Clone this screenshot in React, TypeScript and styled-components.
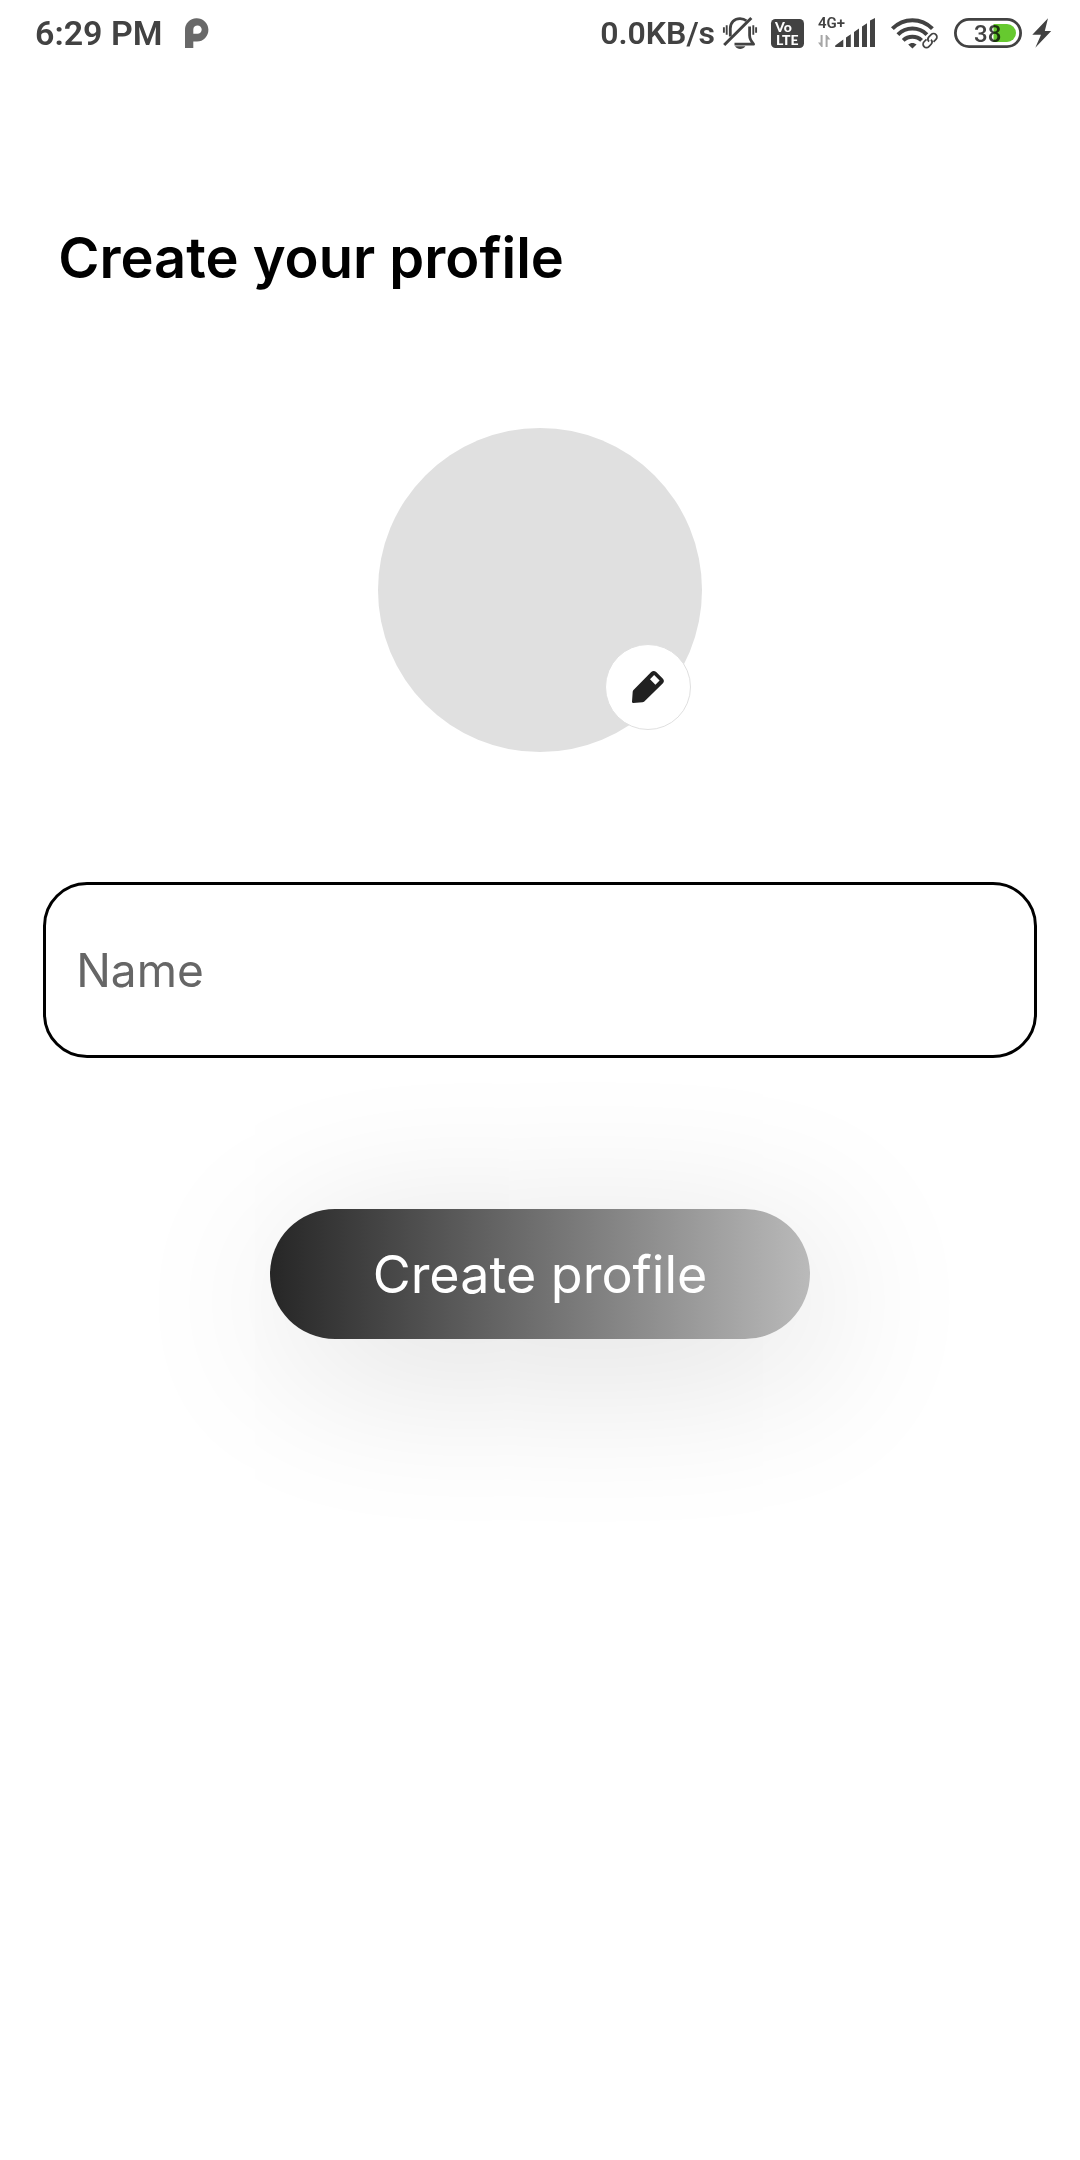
import React from "react";
import styled, { createGlobalStyle } from "styled-components";

const ink = "#424242";

const GlobalStyle = createGlobalStyle`
  *, *::before, *::after { box-sizing: border-box; }
  body {
    margin: 0;
    background: #ffffff;
    font-family: Inter, "Open Sans", sans-serif;
  }
`;

const Screen = styled.div`
  display: flex;
  flex-direction: column;
  min-height: 100vh;
  overflow-x: hidden;
  background: #ffffff;
`;

const StatusBar = styled.header`
  display: flex;
  justify-content: space-between;
  align-items: center;
  height: 66px;
  padding: 0 28px 0 35px;
  color: ${ink};
  font-family: Roboto, sans-serif;
  font-weight: 600;
`;

const StatusGroup = styled.div<{ $gap: number }>`
  display: flex;
  align-items: center;
  gap: ${(p) => p.$gap}px;
`;

const StatusText = styled.span<{ $size: number }>`
  font-size: ${(p) => p.$size}px;
  line-height: 40px;
  white-space: nowrap;
`;

const StatusIcon = styled.svg`
  display: block;
  flex: none;
  height: 32px;
  overflow: visible;
`;

const Form = styled.form`
  display: flex;
  flex-direction: column;
  align-items: center;
  padding: 150px 4% 0;
`;

const Title = styled.h1`
  align-self: stretch;
  margin: 0 0 128px;
  padding-left: 15px;
  color: #000000;
  font-size: 56px;
  font-weight: 600;
  line-height: 84px;
`;

const Avatar = styled.div`
  position: relative;
  width: 324px;
  height: 324px;
  margin-bottom: 130px;
  border-radius: 50%;
  background: #e0e0e0;
`;

const EditButton = styled.button`
  position: absolute;
  right: 11px;
  bottom: 22px;
  display: grid;
  place-items: center;
  width: 86px;
  height: 86px;
  padding: 0;
  border: 1px solid #e0e0e0;
  border-radius: 50%;
  background: #ffffff;
  color: #212121;
`;

const NameInput = styled.input`
  width: 100%;
  height: 176px;
  margin-bottom: 151px;
  padding: 0 30px;
  border: 3px solid #000000;
  border-radius: 44px;
  outline: none;
  background: #ffffff;
  color: #000000;
  font: 400 46px/66px Inter, "Open Sans", sans-serif;

  &::placeholder {
    color: #666666;
    opacity: 1;
  }
`;

const SubmitButton = styled.button`
  width: 540px;
  max-width: 100%;
  height: 130px;
  padding: 0;
  border: 0;
  border-radius: 65px;
  background: linear-gradient(90deg, #262626, #bababa);
  box-shadow: 14px 28px 170px rgba(0, 0, 0, 0.14);
  color: #ffffff;
  font: 400 52px/75px Inter, "Open Sans", sans-serif;
`;

const ParkLogo = () => (
  <StatusIcon width="24" viewBox="0 0 24 32" aria-hidden="true">
    <path
      fill="#686868"
      fillRule="evenodd"
      d="M0 31V13.2A11.7 11.7 0 1 1 12 24.6H8.3V31ZM8.3 16.8H12.3A4.2 4.2 0 1 0 8.3 12.6Z"
    />
  </StatusIcon>
);

const MutedBell = () => (
  <StatusIcon width="40" viewBox="0 0 40 32" fill="none" stroke={ink} strokeWidth="2.8" aria-hidden="true">
    <path d="M7.3 19.5V11.5C7.3 5.5 11.5 1.6 17 1.6c2.6 0 4.8.8 6.4 2.2" />
    <path d="M26.6 9.4V18.5c0 3.8 1.6 5.8 4 8.6H11.5" strokeLinejoin="round" />
    <path d="M1.2 28 28.3 1" strokeWidth="3" />
    <path d="M.9 10.3v5.4M3.7 8.3v9.4M30.3 8.3v9.4M33.1 10.3v5.4" strokeWidth="1.9" />
    <path d="M12 29.2h10.4c-1.4 1.9-3.2 2.7-5.2 2.7s-3.8-.8-5.2-2.7Z" fill={ink} stroke="none" />
  </StatusIcon>
);

const VolteBadge = () => (
  <StatusIcon width="40" viewBox="0 0 40 32" aria-label="VoLTE">
    <rect x="0" y="2" width="33" height="29" rx="4.5" fill={ink} />
    <g fill="#ffffff" fontFamily="Lato, sans-serif" fontWeight="900" fontSize="14">
      <text x="4" y="15">Vo</text>
      <text x="5" y="28">LTE</text>
    </g>
  </StatusIcon>
);

const SignalBars = () => (
  <StatusIcon width="64" viewBox="0 0 64 32" aria-label="Mobile signal">
    <text x="-1" y="10.6" fill={ink} fontFamily="Roboto, sans-serif" fontWeight="600" fontSize="15">
      4G+
    </text>
    <path fill="#a6a6a6" d="M1.6 18h2v12H2.4L-1 25.6h2.6ZM6.6 30h2V22.4h2.8L7.8 18H6.6Z" />
    <path
      fill={ink}
      d="M16.2 30v-1.6L24.3 22.4V30ZM27 30V20.4l4.8-3.2V30ZM35 30V15l5-3.4V30ZM43 30V9.6l5-3.4V30ZM51 30V3.6L56 .9V30Z"
    />
  </StatusIcon>
);

const WifiLinked = () => (
  <StatusIcon width="54" viewBox="0 0 54 32" fill="none" stroke={ink} strokeWidth="4" aria-label="Wi-Fi">
    <path d="M1.4 11.6C12.6.3 30.2.3 41.4 11.6" />
    <path d="M6.9 17.6C15 9.6 27.8 9.6 35.9 17.6" />
    <path d="M12.2 23.4C17.2 18.6 25.6 18.6 30.6 23.4" />
    <path d="M17.2 27.6C19.5 25.5 23.3 25.5 25.6 27.6L21.4 31.4Z" fill={ink} stroke="none" />
    <g transform="translate(39 23.6) rotate(-45)">
      <rect x="-10" y="-5" width="20" height="10" rx="5" fill="#ffffff" stroke="none" />
      <path
        d="M-1.6-3.4H-5a3.4 3.4 0 0 0 0 6.8h3.2A3.4 3.4 0 0 0 1.4 0M1.6 3.4H5a3.4 3.4 0 0 0 0-6.8H1.8A3.4 3.4 0 0 0-1.4 0"
        strokeWidth="1.7"
      />
    </g>
  </StatusIcon>
);

const BatteryFill = styled.path`
  mix-blend-mode: multiply;
`;

const Battery = () => (
  <StatusIcon width="71" viewBox="0 0 71 32" aria-label="Battery 38 percent">
    <rect x="2.4" y="2.4" width="65.2" height="27.2" rx="13.6" fill="none" stroke={ink} strokeWidth="2.8" />
    <text x="21" y="24.8" fill={ink} fontFamily="Roboto, sans-serif" fontWeight="500" fontSize="24">
      38
    </text>
    <BatteryFill d="M40.5 7H54a9 9 0 0 1 0 18H40.5Z" fill="#66c92f" />
  </StatusIcon>
);

const Bolt = () => (
  <StatusIcon width="20" viewBox="0 0 20 32" fill={ink} aria-label="Charging">
    <path d="M16 1.2.3 17.8H9L3.3 30.8 19.2 14H12.8Z" />
  </StatusIcon>
);

const Pencil = () => (
  <svg width="34" height="34" viewBox="0 0 34 34" aria-hidden="true">
    <path
      fill="currentColor"
      fillRule="evenodd"
      d="M20.2 2.1a3.6 3.6 0 0 1 5 0l6.5 6.5a3.6 3.6 0 0 1 0 5L13.3 31.4a3 3 0 0 1-1.8.9L2.2 33A1.2 1.2 0 0 1 1 31.8L1.7 21.8a3 3 0 0 1 .8-1.7ZM23.1 5 19 9.2l5.4 5.6 4.2-4.2Z"
    />
  </svg>
);

export default function App() {
  return (
    <Screen>
      <GlobalStyle />
      <StatusBar>
        <StatusGroup $gap={22}>
          <StatusText $size={34}>6:29 PM</StatusText>
          <ParkLogo />
        </StatusGroup>
        <StatusGroup $gap={8}>
          <StatusText $size={32}>0.0KB/s</StatusText>
          <MutedBell />
          <VolteBadge />
          <SignalBars />
          <WifiLinked />
          <Battery />
          <Bolt />
        </StatusGroup>
      </StatusBar>
      <Form onSubmit={(event) => event.preventDefault()}>
        <Title>Create your profile</Title>
        <Avatar>
          <EditButton type="button" aria-label="Edit photo">
            <Pencil />
          </EditButton>
        </Avatar>
        <NameInput type="text" name="name" aria-label="Name" placeholder="Name" />
        <SubmitButton type="submit">Create profile</SubmitButton>
      </Form>
    </Screen>
  );
}
